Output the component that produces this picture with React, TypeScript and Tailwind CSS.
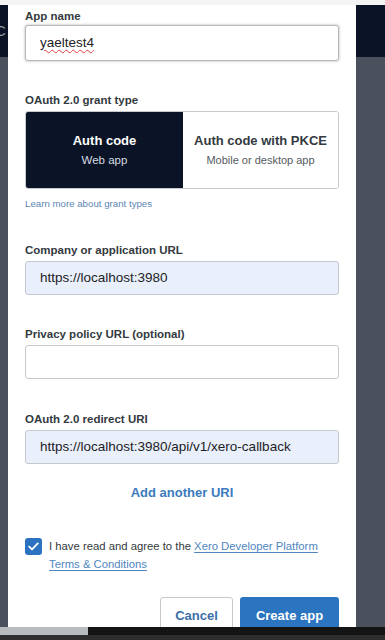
import React from "react";

const Label: React.FC<{ children: React.ReactNode; className?: string }> = ({ children, className = "" }) => (
  <div className={`text-[11.5px] leading-[14px] font-bold text-[#333a40] ${className}`}>{children}</div>
);

const Field: React.FC<{ children?: React.ReactNode; filled?: boolean; focused?: boolean; className?: string }> = ({
  children,
  filled,
  focused,
  className = "",
}) => (
  <div
    className={`flex items-center px-[14px] rounded-[3px] border text-[13.5px] text-[#1d2226] ${
      filled ? "bg-[#e9f0fb]" : "bg-white"
    } ${focused ? "border-[#b5b9bd] shadow-[0_0_2px_1px_rgba(0,0,0,0.15)]" : "border-[#c6cacf]"} ${className}`}
  >
    {children}
  </div>
);

const App: React.FC = () => {
  return (
    <div
      className="w-[385px] h-[640px] flex flex-col overflow-hidden bg-[#4a505c]"
      style={{ fontFamily: '"Liberation Sans", Arial, sans-serif' }}
    >
      <div className="h-[5px] bg-[#f4f4f4]" />

      <div className="flex flex-1 min-h-0">
        {/* left backdrop */}
        <div className="w-[8px] flex flex-col overflow-hidden">
          <div className="h-[52px] bg-[#0b1426] flex items-center">
            <span className="-ml-[5px] text-[15px] text-[#9aa0aa]">C</span>
          </div>
          <div className="flex-1 bg-[#4a505c]" />
        </div>

        {/* modal */}
        <div className="flex-1 bg-white px-[17px] overflow-hidden">
          <Label className="mt-[4px]">App name</Label>
          <Field focused className="mt-[2px] h-[36px]">
            <span className="underline decoration-wavy decoration-[#e04040] decoration-1 underline-offset-2">yaeltest4</span>
          </Field>

          <Label className="mt-[32px]">OAuth 2.0 grant type</Label>
          <div className="mt-[4px] h-[78px] flex rounded-[3px] border border-[#c6cacf] overflow-hidden">
            <div className="w-[157px] bg-[#0b1426] flex flex-col items-center justify-center">
              <div className="text-[13px] font-bold text-white leading-[16px]">Auth code</div>
              <div className="mt-[5px] text-[11.5px] text-[#d7dbe2] leading-[13px]">Web app</div>
            </div>
            <div className="flex-1 bg-white flex flex-col items-center justify-center">
              <div className="text-[13px] font-bold text-[#333a40] leading-[16px]">Auth code with PKCE</div>
              <div className="mt-[5px] text-[11px] text-[#555b61] leading-[13px]">Mobile or desktop app</div>
            </div>
          </div>
          <div className="mt-[9px] text-[9.7px] leading-[12px] text-[#5d86b3]">Learn more about grant types</div>

          <Label className="mt-[33px]">Company or application URL</Label>
          <Field filled className="mt-[4px] h-[34px]">https://localhost:3980</Field>

          <Label className="mt-[32px]">Privacy policy URL (optional)</Label>
          <Field className="mt-[4px] h-[34px]" />

          <Label className="mt-[33px]">OAuth 2.0 redirect URI</Label>
          <Field filled className="mt-[4px] h-[34px]">https://localhost:3980/api/v1/xero-callback</Field>

          <div className="mt-[20px] text-center text-[13px] leading-[18px] font-bold text-[#3b7bbd]">Add another URI</div>

          <div className="mt-[35px] flex items-start gap-[7px]">
            <div className="mt-[1px] w-[17px] h-[17px] rounded-[3px] bg-[#2d72c0] flex items-center justify-center shrink-0">
              <svg width="11" height="9" viewBox="0 0 11 9" fill="none">
                <path d="M1.2 4.6 L4 7.4 L9.8 1.4" stroke="white" strokeWidth="1.8" strokeLinecap="round" strokeLinejoin="round" />
              </svg>
            </div>
            <div className="text-[11.3px] leading-[18px] text-[#333a40]">
              <div>
                I have read and agree to the{" "}
                <span className="text-[#4f86c0] underline underline-offset-2">Xero Developer Platform</span>
              </div>
              <div className="text-[#4f86c0] underline underline-offset-2">Terms &amp; Conditions</div>
            </div>
          </div>

          <div className="mt-[24px] flex justify-end gap-[7px]">
            <button className="w-[73px] h-[38px] rounded-[3px] border border-[#c6cacf] bg-white text-[13px] font-bold text-[#3b6fa8]">
              Cancel
            </button>
            <button className="w-[99px] h-[38px] rounded-[3px] bg-[#2b74c0] text-[13px] font-bold text-white">
              Create app
            </button>
          </div>
        </div>

        {/* right backdrop */}
        <div className="w-[29px] flex flex-col">
          <div className="h-[52px] bg-[#0b1426]" />
          <div className="flex-1 bg-[#4a505c]" />
        </div>
      </div>

      {/* bottom bar */}
      <div className="h-[13px] flex flex-col">
        <div className="h-[8px] flex">
          <div className="w-[88px] bg-[#b8bbbe]" />
          <div className="flex-1 bg-[#141414]" />
        </div>
        <div className="flex-1 bg-[#2e2e2e]" />
      </div>
    </div>
  );
};

export default App;
